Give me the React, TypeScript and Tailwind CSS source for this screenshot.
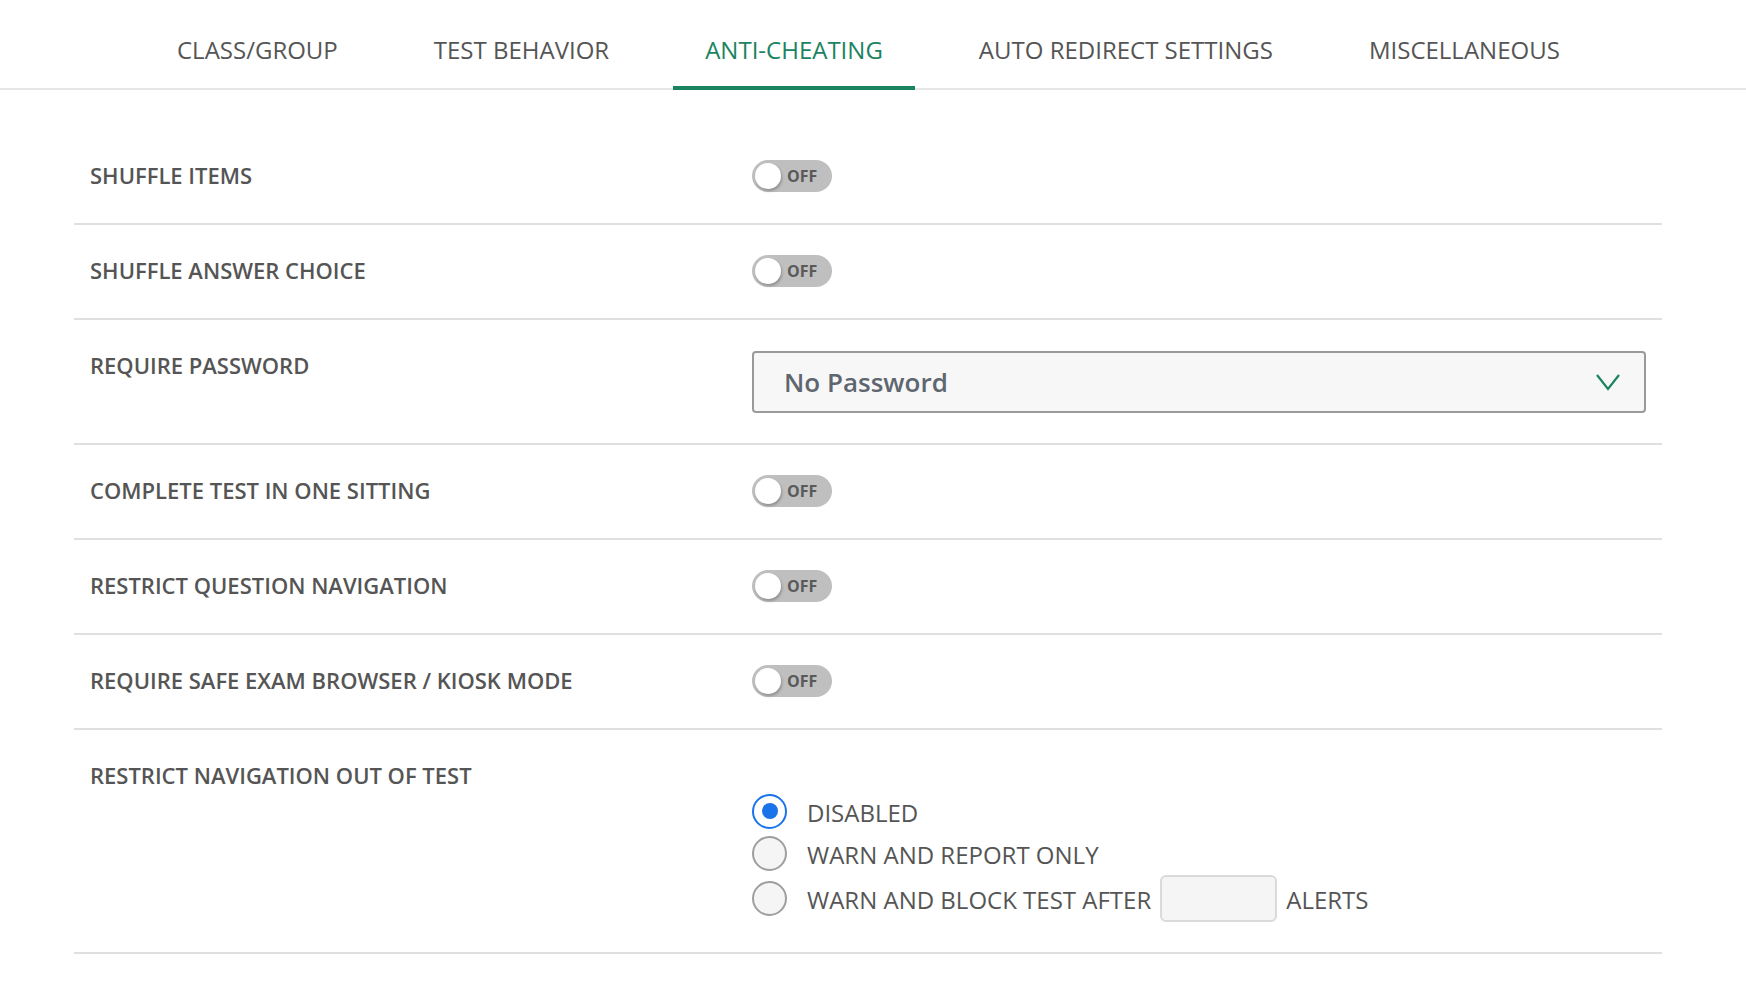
import { useState } from "react";

const tabs = [
  "CLASS/GROUP",
  "TEST BEHAVIOR",
  "ANTI-CHEATING",
  "AUTO REDIRECT SETTINGS",
  "MISCELLANEOUS",
];

const Toggle = () => (
  <button className="-mt-px flex h-8 w-[80px] items-center gap-[6px] rounded-full bg-[#bfbfbf] pl-[3px] outline-none">
    <span className="size-[26px] rounded-full bg-white shadow-[1px_2px_3px_rgba(0,0,0,0.25)]" />
    <span className="text-[16px] font-bold leading-none text-[#5a5a5a]">OFF</span>
  </button>
);

const Row = ({ label, children }: { label: string; children: React.ReactNode }) => (
  <div className="flex items-start border-b-2 border-[#e0e0e0] pt-[31px] pb-[30px] pl-4 pr-4">
    <div className="-mt-[2px] mb-[2px] flex h-8 w-[662px] shrink-0 items-center text-[22px] font-semibold text-[#555555]">
      {label}
    </div>
    <div className="flex-1">{children}</div>
  </div>
);

const Radio = ({ checked }: { checked: boolean }) =>
  checked ? (
    <span className="flex size-[35px] shrink-0 items-center justify-center rounded-full border-2 border-[#1a73e8] bg-white">
      <span className="size-4 rounded-full bg-[#1a73e8]" />
    </span>
  ) : (
    <span className="size-[35px] shrink-0 rounded-full border-2 border-[#9e9e9e] bg-[#f5f5f5]" />
  );

export default function App() {
  const [active] = useState(2);
  const [mode, setMode] = useState(0);

  return (
    <div className="min-h-screen bg-white font-['Open_Sans',sans-serif]">
      {/* Tabs */}
      <nav className="flex h-[90px] border-b-2 border-[#e6e6e6] pl-[145px]">
        {tabs.map((t, i) => (
          <div
            key={t}
            className={`mr-8 -mb-[2px] h-[90px] border-b-4 px-8 pt-[34px] text-[24px] leading-[32px] ${
              i === active
                ? "border-[#1a8361] text-[#1a8361]"
                : "border-transparent text-[#555555]"
            }`}
          >
            {t}
          </div>
        ))}
      </nav>

      <div className="ml-[74px] w-[1588px] pt-[40px]">
        <Row label="SHUFFLE ITEMS">
          <Toggle />
        </Row>
        <Row label="SHUFFLE ANSWER CHOICE">
          <Toggle />
        </Row>
        <Row label="REQUIRE PASSWORD">
          <div className="flex h-[62px] items-center justify-between rounded-[4px] border-2 border-[#9a9a9a] bg-[#f7f7f7] pl-[30px] pr-[24px]">
            <span className="text-[26px] font-semibold text-[#5e6670]">No Password</span>
            <svg width="24" height="17" viewBox="0 0 24 17" fill="none">
              <path d="M1 1l11 14L23 1" stroke="#1a8361" strokeWidth="2.2" />
            </svg>
          </div>
        </Row>
        <Row label="COMPLETE TEST IN ONE SITTING">
          <Toggle />
        </Row>
        <Row label="RESTRICT QUESTION NAVIGATION">
          <Toggle />
        </Row>
        <Row label="REQUIRE SAFE EXAM BROWSER / KIOSK MODE">
          <Toggle />
        </Row>
        <Row label="RESTRICT NAVIGATION OUT OF TEST">
          <div className="mt-[29px] flex flex-col text-[24px] text-[#555555]">
            <label className="flex h-[42px] cursor-pointer items-center gap-[20px]" onClick={() => setMode(0)}>
              <Radio checked={mode === 0} />
              <span className="pt-[3px]">DISABLED</span>
            </label>
            <label className="flex h-[42px] cursor-pointer items-center gap-[20px]" onClick={() => setMode(1)}>
              <Radio checked={mode === 1} />
              <span className="pt-[3px]">WARN AND REPORT ONLY</span>
            </label>
            <label className="flex h-[48px] cursor-pointer items-center gap-[20px]" onClick={() => setMode(2)}>
              <Radio checked={mode === 2} />
              <span className="flex items-center">
                <span className="pt-[3px]">WARN AND BLOCK TEST AFTER</span>
                <input className="mx-[9px] h-[47px] w-[117px] rounded-[6px] border-2 border-[#dadada] bg-[#f5f5f5] outline-none" />
                <span className="pt-[3px]">ALERTS</span>
              </span>
            </label>
          </div>
        </Row>
      </div>
    </div>
  );
}
